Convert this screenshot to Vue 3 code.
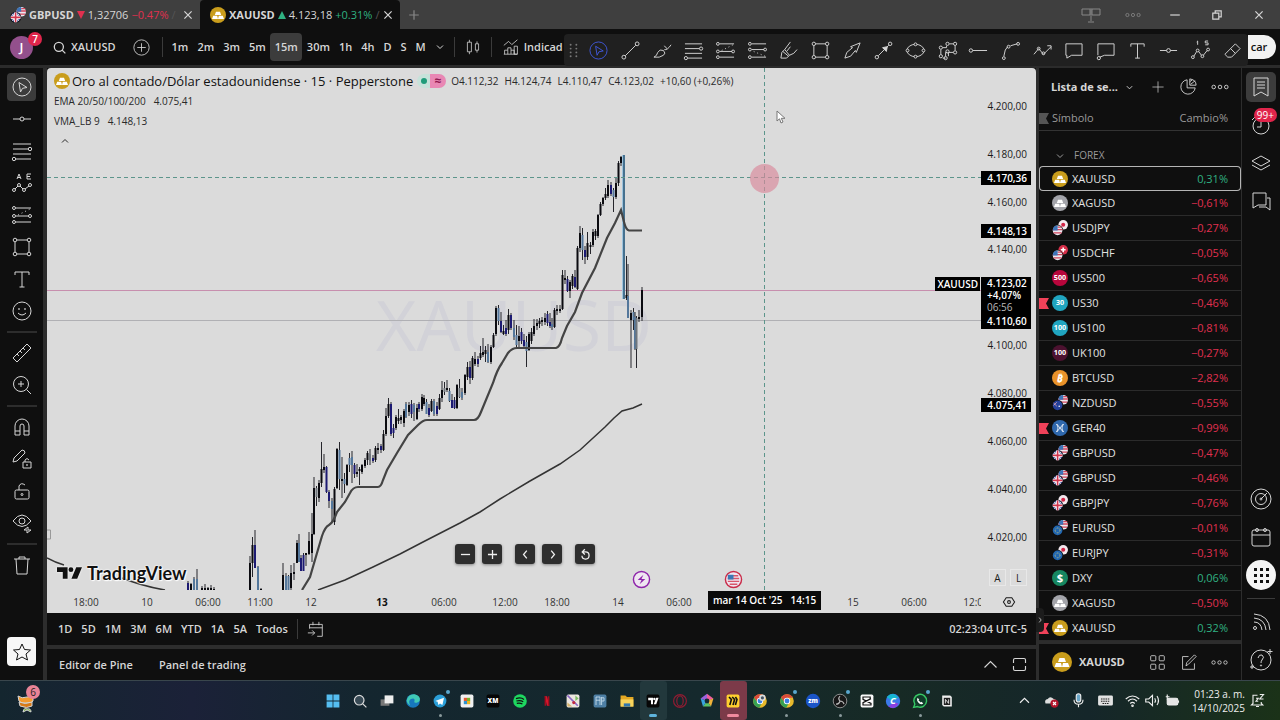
<template>
  <div class="desktop">
    <header class="titlebar">
      <div v-for="tab in tabs" :key="tab.name" class="tab" :class="{ active: tab.active }">
        <svg class="coin" viewBox="0 0 20 20" v-html="coins[tab.coin]"></svg>
        <b>{{ tab.name }}</b>
        <i class="tri" :class="tab.dir"></i>
        <span>{{ tab.price }}</span>
        <span :class="tab.dir">{{ tab.change }}</span>
        <span class="fade">/</span>
        <button class="tab-close" aria-label="Cerrar"><svg viewBox="0 0 20 20" v-html="icons.close"></svg></button>
      </div>
      <button class="tab-add" aria-label="Nueva pestaña"><svg viewBox="0 0 20 20" v-html="icons.plus"></svg></button>
      <div class="win-buttons">
        <button v-for="w in ['layout', 'dots', 'minimize', 'restore', 'close']" :key="w" :class="w" :aria-label="w">
          <svg viewBox="0 0 20 20" v-html="icons[w]"></svg>
        </button>
      </div>
    </header>

    <div class="topbar">
      <button class="avatar" aria-label="Perfil">J<span class="badge">7</span></button>
      <button class="search"><svg viewBox="0 0 20 20" v-html="icons.search"></svg>XAUUSD</button>
      <button class="compare" aria-label="Comparar"><svg viewBox="0 0 20 20" v-html="icons.circlePlus"></svg></button>
      <i class="vsep"></i>
      <div class="intervals">
        <button v-for="i in intervals" :key="i" :class="{ on: i === '15m' }">{{ i }}</button>
        <button aria-label="Más"><svg class="tiny" viewBox="0 0 20 20" v-html="icons.down"></svg></button>
      </div>
      <i class="vsep"></i>
      <button class="candle-btn" aria-label="Velas"><svg viewBox="0 0 20 20" v-html="icons.candles"></svg></button>
      <i class="vsep"></i>
      <button class="indicators"><svg viewBox="0 0 20 20" v-html="icons.indicators"></svg>Indicad</button>
      <button class="publish">car</button>
      <div class="favorites">
        <svg class="grip" viewBox="0 0 20 20" v-html="icons.grip"></svg>
        <button v-for="(f, n) in favorites" :key="n" :class="{ picked: n === 0 }" :aria-label="f">
          <svg viewBox="0 0 20 20" v-html="icons[f]"></svg>
        </button>
      </div>
    </div>

    <main class="workspace">
      <nav class="tools">
        <template v-for="(t, n) in tools" :key="n">
          <hr v-if="t === '-'">
          <button v-else :class="{ on: n === 0 }" :aria-label="t"><svg viewBox="0 0 20 20" v-html="icons[t]"></svg></button>
        </template>
        <button class="star" aria-label="Favoritos"><svg viewBox="0 0 20 20" v-html="icons.star"></svg></button>
      </nav>

      <section class="center">
        <div class="chart">
          <div class="plot">
            <div class="watermark">XAUUSD</div>
            <svg class="series" viewBox="47 68 934 522" preserveAspectRatio="none">
              <path d="M47 290.5H981" stroke="#c78fae" />
              <path d="M47 320.5H981" stroke="#b0b0b4" />
              <path d="M47 530H50.500V539H47" stroke="#999" fill="none" />
              <path class="ema" d="M47 558Q56 563 64 565M122 578Q142 586 165 590M318 590L345 580L373 567L400 554L423 542L460 523L480 512L500 499L530 481L560 464L580 450L605 427L614 418L622 411L633 408L642 404" />
              <g v-for="(c, n) in candles" :key="n" :fill="tones[c[5]]" stroke="none">
                <rect :x="c[0] - 0.5" :y="c[1]" width="1" :height="c[2] - c[1]" fill="#26262c" />
                <rect :x="c[0] - 1" :y="c[3]" width="2" :height="c[4] - c[3]" />
              </g>
              <g stroke="none">
                <rect x="622" y="155" width="2" height="144" fill="#9dc3dd" />
                <rect x="623" y="155" width="2" height="144" fill="#46718f" />
              </g>
              <path class="vma" d="M302 590L310 577L317 553L322 536Q325 527 329 525Q333 523 337 512L345 502L350 493Q353 487 358 487H378Q381 487 383 480L387 470L397 453L408 435L418 425Q423 420 427 420H474Q478 420 481 412L493 383Q497 370 502 363L508 353Q512 348 517 348H556Q560 347 562 338L567 326L575 312L582 293L595 268L607 238L615 223L621 210L624 222Q626 230 629 230.500H642" />
              <path class="cross" d="M47 177.5H981M764.500 68V590" />
            </svg>
            <i class="halo"></i>
            <svg class="pointer" viewBox="0 0 10 14"><path d="M1 1v10l2.500-2.200L5 13l2-1-1.700-3.700H9z" fill="#fff" stroke="#777" /></svg>

            <div class="legend">
              <div class="title">
                <svg class="coin" viewBox="0 0 20 20" v-html="coins.gold"></svg>
                <span class="name">Oro al contado/Dólar estadounidense · 15 · Pepperstone</span>
                <span class="status"><i></i><b>≈</b></span>
                <span class="ohlc"><span>O4.112,32</span><span>H4.124,74</span><span>L4.110,47</span><span>C4.123,02</span><span>+10,60 (+0,26%)</span></span>
              </div>
              <div class="study"><span>EMA 20/50/100/200</span><span>4.075,41</span></div>
              <div class="study"><span>VMA_LB 9</span><span>4.148,13</span></div>
              <button class="fold" aria-label="Ocultar"><svg viewBox="0 0 20 20" v-html="icons.up"></svg></button>
            </div>

            <div class="brand">
              <svg viewBox="0 0 26 14"><path d="M0 1h11v12H6V6H0zM20 1h6l-5 12h-6z" /><circle cx="14.500" cy="3.500" r="2.500" /></svg>
              <span>TradingView</span>
            </div>
            <div class="zoomers">
              <button v-for="z in ['minus', 'add', 'left', 'right', 'reset']" :key="z" :class="z" :aria-label="z"><svg viewBox="0 0 20 20" v-html="icons[z]"></svg></button>
            </div>
            <svg class="event bolt" viewBox="0 0 20 20"><circle cx="10" cy="10" r="8.500" /><path d="M12 5l-6 5.500h4L8 15l6-5.500h-4z" fill="#8e24aa" stroke="none" /></svg>
            <svg class="event flag" viewBox="0 0 20 20"><circle cx="10" cy="10" r="8.500" /><path d="M5 6h10M4 9h12M4 12h12M6 15h8" stroke="#d8566a" /><path d="M4 5h6v5H4z" fill="#3b78b5" stroke="none" /></svg>
          </div>

          <div class="prices">
            <span v-for="p in prices" :key="p[0]" class="mark" :style="{ top: pct(p[1] - 68, 522) }">{{ p[0] }}</span>
            <b v-for="p in priceTags" :key="p[0]" class="tag" :style="{ top: pct(p[1] - 68, 522) }">{{ p[0] }}</b>
            <div class="now"><b>4.123,02</b><b>+4,07%</b><span>06:56</span><b>4.110,60</b></div>
            <b class="sym">XAUUSD</b>
            <div class="scale"><button>A</button><button>L</button></div>
          </div>

          <div class="times">
            <span v-for="(t, n) in times" :key="n" :class="{ strong: t[0] === '13' }" :style="{ left: pct(t[1] - 47, 934) }">{{ t[0] }}</span>
            <b class="time-tag"><span>mar 14 Oct '25</span><span>14:15</span></b>
          </div>
          <button class="axis-cfg" aria-label="Ajustes"><svg viewBox="0 0 20 20" v-html="icons.hex"></svg></button>
        </div>

        <div class="ranges">
          <button v-for="r in ranges" :key="r">{{ r }}</button>
          <i class="vsep"></i>
          <button aria-label="Ir a"><svg viewBox="0 0 20 20" v-html="icons.goto"></svg></button>
          <span class="clock">02:23:04 UTC-5</span>
        </div>
        <div class="panels">
          <button>Editor de Pine</button>
          <button>Panel de trading</button>
          <button class="push" aria-label="Abrir"><svg viewBox="0 0 20 20" v-html="icons.wideUp"></svg></button>
          <button aria-label="Maximizar"><svg viewBox="0 0 20 20" v-html="icons.maximize"></svg></button>
        </div>
      </section>

      <aside class="watchlist">
        <div class="wl-head">
          <button class="wl-name">Lista de se...<svg class="tiny" viewBox="0 0 20 20" v-html="icons.down"></svg></button>
          <button v-for="i in ['plus', 'pie', 'dots']" :key="i" :aria-label="i"><svg viewBox="0 0 20 20" v-html="icons[i]"></svg></button>
        </div>
        <table>
          <thead>
            <tr class="cols"><th><i class="pin"></i>Símbolo</th><th>Cambio%</th></tr>
            <tr class="group"><th colspan="2"><svg class="tiny" viewBox="0 0 20 20" v-html="icons.down"></svg>FOREX</th></tr>
          </thead>
          <tbody>
            <tr v-for="(r, n) in rows" :key="n" :class="{ current: n === 0 }">
              <td><i v-if="r[3]" class="pin red"></i><svg class="coin" viewBox="0 0 20 20" v-html="coins[r[1]]"></svg>{{ r[0] }}</td>
              <td :class="r[2][0] === '−' ? 'down' : 'up'">{{ r[2] }}</td>
            </tr>
          </tbody>
        </table>
        <button class="collapse" aria-label="Contraer"><svg viewBox="0 0 20 20" v-html="icons.right"></svg></button>
        <div class="detail">
          <svg class="coin" viewBox="0 0 20 20" v-html="coins.gold"></svg>
          <b>XAUUSD</b>
          <button v-for="i in ['grid', 'edit', 'dots']" :key="i" :aria-label="i"><svg viewBox="0 0 20 20" v-html="icons[i]"></svg></button>
        </div>
      </aside>

      <nav class="rail">
        <button class="on" aria-label="Lista"><svg viewBox="0 0 20 20" v-html="icons.list"></svg></button>
        <button aria-label="Alertas"><svg viewBox="0 0 20 20" v-html="icons.alarm"></svg><span class="badge">99+</span></button>
        <button aria-label="Datos"><svg viewBox="0 0 20 20" v-html="icons.layers"></svg></button>
        <button aria-label="Chat"><svg viewBox="0 0 20 20" v-html="icons.chat"></svg></button>
        <button class="lower" aria-label="Screener"><svg viewBox="0 0 20 20" v-html="icons.radar"></svg></button>
        <button aria-label="Calendario"><svg viewBox="0 0 20 20" v-html="icons.calendar"></svg></button>
        <button class="apps" aria-label="Productos"><svg viewBox="0 0 20 20" v-html="icons.apps"></svg></button>
        <hr>
        <button aria-label="Noticias"><svg viewBox="0 0 20 20" v-html="icons.feed"></svg></button>
        <button aria-label="Ayuda"><svg viewBox="0 0 20 20" v-html="icons.help"></svg></button>
      </nav>
    </main>

    <footer class="taskbar">
      <button class="widget" aria-label="Widgets">
        <svg viewBox="0 0 20 20"><path d="M1 5q4 3 9 1 5 0 6-2v6q-2 3-6 2-6 1-8-2z" fill="#f39a2d" /><path d="M2 11q6 3 13 0v4q-5 3-12 0z" fill="#d77a18" /><path d="M6 21q1-5 4-3 4-1 4 3l-4-2z" fill="#7cb342" /></svg>
        <span class="badge">6</span>
      </button>
      <div class="apps-row">
        <button v-for="(a, n) in apps" :key="n" :class="[a[1]]" :aria-label="'app ' + n">
          <svg viewBox="0 0 20 20" v-html="a[0]"></svg>
        </button>
      </div>
      <div class="tray">
        <svg v-for="i in ['up', 'cloud', 'mic', 'keyboard']" :key="i" :class="i" viewBox="0 0 20 20" v-html="icons[i]"></svg>
        <span class="net"><svg v-for="i in ['wifi', 'sound', 'battery']" :key="i" viewBox="0 0 20 20" v-html="icons[i]"></svg></span>
        <span class="date"><span>01:23 a. m.</span><span>14/10/2025</span></span>
        <svg viewBox="0 0 20 20" v-html="icons.bell"></svg>
      </div>
    </footer>
  </div>
</template>

<script setup>
const pct = (v, total) => (v / total) * 100 + '%';

const tabs = [
  { name: 'GBPUSD', coin: 'gbus', dir: 'down', price: '1,32706', change: '−0.47%' },
  { name: 'XAUUSD', coin: 'gold', dir: 'up', price: '4.123,18', change: '+0.31%', active: true },
];
const intervals = ['1m', '2m', '3m', '5m', '15m', '30m', '1h', '4h', 'D', 'S', 'M'];
const ranges = ['1D', '5D', '1M', '3M', '6M', 'YTD', '1A', '5A', 'Todos'];
const favorites = ['cursor', 'line', 'brush', 'fib', 'longPos', 'shortPos', 'marker', 'rect', 'arrow', 'arrowLine', 'ellipse', 'bars', 'ray', 'curve', 'zigzag', 'comment', 'callout', 'text', 'hline', 'waves', 'eraser'];
const tools = ['cursor', 'hline', 'fib', 'pattern', 'longPos', 'rect', 'text', 'smile', '-', 'ruler', 'zoomIn', '-', 'magnet', 'penLock', 'lock', 'eye', '-', 'trash'];

const dot = (x, y, r = 1.5) => `<circle cx="${x}" cy="${y}" r="${r}"/>`;
const icons = {
  close: '<path d="M4 4l12 12M16 4L4 16"/>',
  plus: '<path d="M10 2v16M2 10h16"/>',
  layout: '<path d="M1 4h8v6H1zM11 4h8v6h-8zM10 3v13M7 17h6"/>',
  dots: dot(3, 10, 2) + dot(10, 10, 2) + dot(17, 10, 2),
  minimize: '<path d="M2 10h16"/>',
  restore: '<path d="M3 7h10v10H3zM7 7V3h10v10h-4"/>',
  search: '<circle cx="9" cy="9" r="7"/><path d="M14 14L19 19"/>',
  circlePlus: '<circle cx="10" cy="10" r="9"/><path d="M10 5v10M5 10h10"/>',
  down: '<path d="M4 7l6 6 6-6"/>',
  up: '<path d="M4 13l6-6 6 6"/>',
  wideUp: '<path d="M2 14l8-8 8 8"/>',
  candles: '<path d="M3 4h5v12H3zM5.500 1v3M5.500 16v3M13 6h4v8h-4zM15 3v3M15 14v3"/>',
  indicators: '<path d="M1 8l6-5 4 4 7-6M2 19v-5h4v5M6 14v-3h4v8M10 14h4v5M14 19V9h4v10zM1 19h17"/>',
  grip: '<g fill="#777" stroke="none">' + [4, 8, 12, 16].map(y => dot(7, y, 1) + dot(13, y, 1)).join('') + '</g>',
  cursor: '<circle cx="10" cy="10" r="9"/><path d="M7 5.500l8 5-4.500.8L8.500 15z"/>',
  line: '<path d="M4.500 15.500L15.500 4.500"/>' + dot(3, 17, 2) + dot(17, 3, 2),
  brush: '<path d="M1 17q3-1 4-5 2-4 6-2 3 3 0 5-4 3-10 2zM12 9q3 1 7-5M15 8q-2-1-3-3"/>',
  fib: '<path d="M1 3h18M1 8h15M1 13h18M4 18h15"/>' + dot(18, 8, 1.7) + dot(2, 18, 1.7),
  longPos: '<path d="M4 3h15M4 11h13M4 17h15"/><path d="M6 10L18 4" stroke-dasharray="1 3"/>' + dot(2, 3) + dot(2, 11) + dot(18, 11) + dot(2, 17),
  shortPos: '<path d="M4 3h15M4 9h13M4 17h15"/><path d="M6 11l12 5" stroke-dasharray="1 3"/>' + dot(2, 3) + dot(2, 9) + dot(18, 9) + dot(2, 17),
  marker: '<path d="M2 18h6l3-3-5-6-3 3zM6 9l6-8M11 15q5-1 8-6M4 11l6 5M8 11l4-5"/>',
  rect: '<path d="M5 3h10M5 17h10M3 5v10M17 5v10"/>' + dot(3, 3, 1.8) + dot(17, 3, 1.8) + dot(3, 17, 1.8) + dot(17, 17, 1.8),
  arrow: '<path d="M2 18l2-6 6-5-2-1 10-4-4 10-1-2-5 6z"/>',
  arrowLine: '<path d="M4.500 15.500L15.500 4.500"/><path d="M9 7l5-1-1 5z" fill="currentColor"/>' + dot(3, 17, 1.8) + dot(17, 3, 1.8),
  ellipse: '<ellipse cx="10" cy="10" rx="9" ry="6.500"/><g fill="#202020">' + dot(10, 3.5) + dot(10, 16.5) + dot(1.6, 10) + dot(18.4, 10) + '</g>',
  bars: '<path d="M3 14v-5M5 7h4V5M12 3h4M18 5v5M16 12h-5v4M8 18H5M8 16v-4h2"/>' + [[3, 16], [3, 7], [10, 3], [18, 3], [18, 12], [8, 18], [10, 11]].map(p => dot(...p, 1.7)).join(''),
  ray: '<path d="M4 10h15"/>' + dot(2, 10, 1.8),
  curve: '<path d="M3 16q1-8 4-10M10 5l7-2"/>' + dot(3, 18) + dot(8, 6) + dot(18, 3),
  zigzag: '<path d="M1 14l5-6 5 6 8-8M15 5h4v4"/>' + dot(6, 8) + dot(11, 13),
  comment: '<path d="M2 3h17v12H8l-5 3v-3H2z"/>',
  callout: '<path d="M2 15V3h17v12H9l-5 2"/>' + dot(3, 18, 1.7),
  text: '<path d="M3 6V3h14v3M10 3v15M7.500 18h5"/>',
  hline: '<path d="M1 10h7M12 10h7"/>' + dot(10, 10, 2),
  waves: '<path d="M3 16l3-5M8 11l3 4M13 15l4-5"/>' + dot(2, 17) + dot(7, 10) + dot(12, 16) + dot(18, 9) + '<path d="M6 1l1-1v4M18 0h-3v2h3v2h-3"/>',
  pattern: '<path d="M3 16l3-3M8 13l3 3M13 16l4-3M5 6l2-5 2 5M5.500 4.500h3M19 1h-4v5h4M15 3.500h3"/>' + dot(2, 17) + dot(7, 12) + dot(12, 17) + dot(18, 12),
  eraser: '<path d="M2 14L13 3l5 5L9 17H5zM8 8l5 5"/>',
  smile: '<circle cx="10" cy="10" r="9"/><path d="M6 12q4 4 8 0"/><circle cx="7" cy="8" r=".5"/><circle cx="13" cy="8" r=".5"/>',
  ruler: '<path d="M1 15L15 1l4 4L5 19zM5 11l2 2M8 8l2 2M11 5l2 2"/>',
  zoomIn: '<circle cx="9" cy="9" r="7.500"/><path d="M14.500 14.500L19 19M9 6v6M6 9h6"/>',
  magnet: '<path d="M3 18V9a7 7 0 0 1 14 0v9h-5V9a2 2 0 0 0-4 0v9zM3 14h5M12 14h5"/>',
  penLock: '<path d="M1 13l1-4 8-8q3 0 3 3l-8 8zM11 13h8v6h-8zM13 13v-2q2-3 4 0"/><circle cx="15" cy="16" r=".5"/>',
  lock: '<rect x="3" y="9" width="14" height="9" rx="1.500"/><path d="M7 9V5q2-4 6-1"/><circle cx="10" cy="13.500" r="1"/>',
  eye: '<path d="M1 8q9-12 18 0-9 11-18 0z"/><circle cx="10" cy="8" r="3"/><path d="M12 17l4-3v3h3l-4 3v-3z"/>',
  trash: '<path d="M2 4h16M7 4V2h6v2M4 4l1 15h10l1-15"/>',
  star: '<path d="M10 2l2.500 5.500 6 .5-4.500 4 1.500 6-5.500-3-5.500 3L6 12 1.500 8l6-.5z"/>',
  minus: '<path d="M3 10h14"/>',
  add: '<path d="M3 10h14M10 3v14"/>',
  left: '<path d="M12 4l-5 6 5 6"/>',
  right: '<path d="M8 4l5 6-5 6"/>',
  reset: '<path d="M5 6h5a5.500 5.500 0 1 1-5.500 6M9 2L5 6l4 4"/>',
  hex: '<path d="M6 4h8l4 6-4 6H6l-4-6z"/><circle cx="10" cy="10" r="2"/>',
  goto: '<path d="M3 9V4h15v14h-6M3 8h15M7 1v4M14 1v4M1 14h8M6 11l3 3-3 3"/>',
  maximize: '<path d="M2 8V4q0-2 2-2h12q2 0 2 2v4M18 12v4q0 2-2 2H4q-2 0-2-2v-4"/>',
  pie: '<path d="M9 2a8 8 0 1 0 9 9H9z"/><path d="M12 1v7h7q0-6-7-7zM13 7l5-4M12 4l3-2"/>',
  grid: '<rect x="2" y="2" width="6" height="6" rx="1"/><rect x="12" y="2" width="6" height="6" rx="1"/><rect x="2" y="12" width="6" height="6" rx="1"/><rect x="12" y="12" width="6" height="6" rx="1"/>',
  edit: '<path d="M10 3H3v15h14v-7M7 14l1-4 9-9 2 2-9 9z"/>',
  list: '<path d="M3 1h14v18l-7-4-7 4zM6 5h8M6 8h8M6 11h8"/>',
  alarm: '<circle cx="10" cy="11" r="8"/><path d="M10 7v5H6M1 5l3-3"/>',
  layers: '<path d="M1 8l9-5 9 5-9 5zM1 12l9 5 9-5"/>',
  chat: '<path d="M2 2h13v12H7l-5 3zM8 16h7l4 3V7h-3"/>',
  radar: '<circle cx="10" cy="10" r="10"/><circle cx="10" cy="10" r="5.500"/><circle cx="10" cy="10" r="1"/><path d="M10 10l6-6"/>',
  calendar: '<rect x="1" y="3" width="18" height="16" rx="2"/><path d="M1 8h18"/>' + dot(6, 3) + dot(14, 3),
  apps: '<g fill="#111" stroke="none">' + [3, 9, 15].map(y => [3, 9, 15].map(x => `<rect x="${x}" y="${y}" width="3" height="3"/>`).join('')).join('') + '</g>',
  feed: '<circle cx="4" cy="16" r="1.500"/><path d="M3 10q7 0 8 8M3 6q11 1 12 12M3 2q15 1 16 16"/>',
  help: '<circle cx="10" cy="10" r="10"/><path d="M7 8q1-4 4-3 3 2 0 5-1 1-1 3"/><circle cx="10" cy="15.500" r=".6"/><path d="M19-1v5M16.500 1.500h5M1 15v4M-1 17h4"/>',
  cloud: '<path d="M2 14q-2-5 3-6 3-5 8 0 5 1 3 6z" fill="#ddd" stroke="none"/><circle cx="14" cy="14" r="5.500" fill="#b3152b" stroke="none"/><path d="M12 12l4 4M16 12l-4 4" stroke="#fff"/>',
  mic: '<rect x="7" y="1" width="6" height="11" rx="3" fill="#6aa7c9"/><path d="M4 9q0 6 6 6t6-6M10 15v4"/>',
  keyboard: '<rect x="1" y="4" width="18" height="12" rx="1" fill="#ddd"/><path d="M4 8h12M4 11h12M6 14h8" stroke="#222" stroke-dasharray="2 1"/>',
  wifi: '<path d="M1 8q9-8 18 0M4 11q6-6 12 0M7 14q3-3 6 0"/><circle cx="10" cy="17" r="1"/>',
  sound: '<path d="M1 8h4l5-5v14l-5-5H1zM13 7q2 3 0 6M16 4q4 6 0 12"/>',
  battery: '<rect x="3" y="7" width="14" height="9" rx="2" fill="#e5e5e5"/><path d="M18 10v3M3 2v7M1 5h5"/>',
  bell: '<path d="M10 3H4v11l-2 2h15l-2-2v-2M8 18h4M13 2h5l-5 6h5M8 7h3l-3 4h3"/>',
};

// symbol logos, all drawn on a 20x20 canvas
const flags = {
  us: '<circle r="6" fill="#e9e9f0"/><path d="M-6-1h12M-5 3h10M0-4h5" stroke="#d4455b" stroke-width="1.600"/><path d="M-6 0q0-6 6-6v6z" fill="#3d74b8" stroke="none"/>',
  gb: '<circle r="6" fill="#3f5ea8"/><path d="M-4-4l8 8M4-4l-8 8" stroke="#f1dbe2" stroke-width="1.500"/><path d="M0-6v12M-6 0h12" stroke="#fff" stroke-width="4"/><path d="M0-6v12M-6 0h12" stroke="#d0354e" stroke-width="2"/>',
  jp: '<circle r="6" fill="#f3e9ee"/><circle r="2.500" fill="#d32446"/>',
  ch: '<circle r="6" fill="#d62f49"/><path d="M0-3v6M-3 0h6" stroke="#fff" stroke-width="2"/>',
  nz: '<circle r="6" fill="#24409a"/><path d="M-5-3l4 4M-1-4l-4 4" stroke="#e8a8b5"/><circle cx="2" cy="1" r="1" fill="#fff"/>',
  eu: '<circle r="6" fill="#2166b0"/><circle r="3" fill="none" stroke="#e7d26b" stroke-dasharray="1 1"/>',
};
const pair = (a, b) => `<g stroke="none"><g transform="translate(14 6)">${flags[b]}</g><circle cx="7" cy="13" r="7" fill="#0f0f0f"/><g transform="translate(7 13)">${flags[a]}</g></g>`;
const disc = (color, inner) => `<circle cx="10" cy="10" r="10" fill="${color}" stroke="none"/>${inner}`;
const bars = '<path d="M7.500 6h5l1.500 4H6zM4 11h5l1 4H2.500zM11 11h5l1.500 4H10z" fill="#fff" stroke="none"/>';
const label = (t, size) => `<text x="10" y="13" text-anchor="middle" font-size="${size}" font-weight="700" fill="#fff" stroke="none">${t}</text>`;
const coins = {
  gold: disc('#c99d1c', bars),
  silver: disc('#a3a4aa', bars),
  usjp: pair('us', 'jp'),
  usch: pair('us', 'ch'),
  gbus: pair('gb', 'us'),
  gbjp: pair('gb', 'jp'),
  nzus: pair('nz', 'us'),
  euus: pair('eu', 'us'),
  eujp: pair('eu', 'jp'),
  s500: disc('#b8063c', label('500', 9)),
  s30: disc('#20a5c0', label('30', 9)),
  s100: disc('#20a5c0', label('100', 9)),
  u100: disc('#4c1230', label('100', 9)),
  btc: disc('#e9922a', '<g transform="rotate(12 10 10)"><text x="10" y="15" text-anchor="middle" font-size="13" font-weight="700" fill="#fff" stroke="none">₿</text></g>'),
  ger: disc('#2f68ad', '<path d="M5.500 5q4 5 0 10M14.500 5q-4 5 0 10M6 5l8 10M14 5L6 15" stroke="#fff"/>'),
  dxy: disc('#168761', '<text x="10" y="15" text-anchor="middle" font-size="14" font-weight="700" fill="#fff" stroke="none">$</text>'),
};

const rows = [
  ['XAUUSD', 'gold', '0,31%'],
  ['XAGUSD', 'silver', '−0,61%'],
  ['USDJPY', 'usjp', '−0,27%'],
  ['USDCHF', 'usch', '−0,05%'],
  ['US500', 's500', '−0,65%'],
  ['US30', 's30', '−0,46%', true],
  ['US100', 's100', '−0,81%'],
  ['UK100', 'u100', '−0,27%'],
  ['BTCUSD', 'btc', '−2,82%'],
  ['NZDUSD', 'nzus', '−0,55%'],
  ['GER40', 'ger', '−0,99%', true],
  ['GBPUSD', 'gbus', '−0,47%'],
  ['GBPUSD', 'gbus', '−0,46%'],
  ['GBPJPY', 'gbjp', '−0,76%'],
  ['EURUSD', 'euus', '−0,01%'],
  ['EURJPY', 'eujp', '−0,31%'],
  ['DXY', 'dxy', '0,06%'],
  ['XAGUSD', 'silver', '−0,50%'],
  ['XAUUSD', 'gold', '0,32%', true],
];

const prices = [
  ['4.200,00', 106], ['4.180,00', 154], ['4.160,00', 202], ['4.140,00', 249], ['4.100,00', 345],
  ['4.080,00', 393], ['4.060,00', 441], ['4.040,00', 489], ['4.020,00', 537],
];
const priceTags = [['4.170,36', 178], ['4.148,13', 231], ['4.075,41', 405]];
const times = [
  ['18:00', 86], ['10', 147], ['06:00', 208], ['11:00', 260], ['12', 311], ['13', 382], ['06:00', 444],
  ['12:00', 505], ['18:00', 557], ['14', 618], ['06:00', 679], ['15', 853], ['06:00', 914], ['12:00', 976],
];

const tones = { k: '#0b0b10', n: '#1c1a72', b: '#54779b', g: '#70767c' };
// x, high, low, body top, body bottom, tone
const candles = [
  [188, 581, 590, 583, 590, 'n'], [191, 583, 590, 584, 590, 'k'], [194, 577, 590, 579, 590, 'b'], [197, 569, 590, 579, 590, 'b'],
  [202, 586, 590, 588, 590, 'k'], [205, 584, 590, 588, 590, 'k'], [208, 587, 590, 588, 590, 'k'], [211, 585, 590, 588, 590, 'k'], [214, 587, 590, 589, 590, 'k'],
  [250, 556, 590, 563, 590, 'k'], [252.5, 537, 577, 545, 563, 'k'], [255, 530, 568, 545, 568, 'n'], [258, 566, 590, 567, 590, 'b'], [261, 588, 590, 589, 590, 'k'],
  [283, 563, 590, 575, 590, 'k'], [286, 573, 590, 576, 590, 'b'], [288.5, 575, 590, 576, 590, 'b'], [291, 565, 590, 573, 588, 'k'], [294, 563, 580, 572, 574, 'k'],
  [297, 540, 563, 543, 563, 'k'], [299, 534, 560, 543, 562, 'b'], [301, 555, 571, 558, 571, 'n'], [303.5, 553, 571, 555, 571, 'n'], [306, 553, 566, 553, 555, 'k'],
  [309, 532, 555, 541, 554, 'k'], [312, 513, 562, 534, 553, 'k'], [314, 477, 535, 488, 534, 'k'], [316.5, 486, 506, 488, 497, 'g'], [319, 480, 502, 483, 498, 'k'],
  [321.5, 442, 487, 469, 483, 'k'], [324, 454, 473, 467, 470, 'k'], [326.5, 466, 493, 467, 492, 'n'], [329, 490, 508, 492, 501, 'n'], [332, 498, 523, 501, 509, 'b'],
  [334.5, 487, 525, 489, 522, 'k'], [337, 448, 489, 449, 488, 'k'], [339.5, 442, 490, 450, 479, 'b'], [342, 457, 498, 479, 481, 'k'], [344.5, 473, 493, 479, 484, 'b'],
  [347, 464, 486, 465, 485, 'k'], [349.5, 453, 472, 458, 465, 'b'], [352, 451, 483, 457, 465, 'b'], [354.5, 463, 478, 465, 474, 'n'], [357, 464, 477, 472, 474, 'k'],
  [359.5, 467, 485, 469, 471, 'k'], [362, 464, 474, 465, 472, 'k'], [365, 458, 468, 460, 466, 'k'], [367.5, 451, 465, 453, 460, 'k'], [370, 449, 465, 454, 461, 'g'],
  [373, 455, 463, 458, 461, 'n'], [375.5, 446, 462, 448, 460, 'k'], [378, 443, 454, 448, 450, 'k'], [381, 444, 453, 446, 450, 'n'], [383.5, 430, 451, 434, 450, 'k'],
  [386, 408, 436, 416, 434, 'k'], [388.5, 398, 418, 404, 416, 'k'], [391, 402, 436, 404, 434, 'n'], [393.5, 424, 438, 428, 433, 'n'], [396, 415, 430, 417, 428, 'k'],
  [398.5, 409, 424, 418, 421, 'k'], [401, 415, 424, 417, 420, 'k'], [404, 409, 427, 411, 423, 'k'], [406, 402, 418, 404, 417, 'b'], [409, 402, 416, 405, 412, 'k'],
  [411.5, 400, 418, 404, 414, 'n'], [414, 403, 421, 405, 412, 'b'], [417, 404, 420, 408, 419, 'k'], [419, 402, 412, 404, 409, 'n'], [422, 394, 411, 397, 409, 'k'],
  [424, 395, 406, 398, 404, 'k'], [426.5, 399, 414, 402, 414, 'b'], [429, 404, 417, 408, 415, 'n'], [431.5, 399, 412, 401, 411, 'k'], [434, 399, 416, 401, 414, 'b'],
  [437, 402, 416, 406, 414, 'n'], [439.5, 394, 410, 398, 409, 'k'], [442, 381, 402, 390, 398, 'k'], [444.5, 382, 395, 388, 392, 'g'], [447, 380, 392, 388, 390, 'k'],
  [449.5, 388, 402, 391, 401, 'b'], [452, 394, 408, 400, 408, 'n'], [454.5, 397, 409, 400, 408, 'n'], [457, 384, 409, 385, 408, 'k'], [459.5, 379, 398, 388, 397, 'g'],
  [462, 388, 400, 392, 398, 'b'], [465, 374, 395, 375, 393, 'k'], [467.5, 362, 380, 367, 377, 'k'], [470, 361, 384, 367, 378, 'n'], [472.5, 356, 380, 358, 378, 'k'],
  [475, 352, 366, 359, 364, 'k'], [478, 356, 367, 359, 364, 'n'], [480.5, 346, 360, 353, 358, 'k'], [483, 338, 357, 352, 355, 'k'], [485.5, 346, 362, 350, 354, 'k'],
  [488, 344, 363, 352, 362, 'b'], [491, 345, 364, 347, 362, 'k'], [493.5, 333, 348, 335, 347, 'k'], [496, 306, 336, 308, 334, 'k'], [498.5, 305, 325, 308, 321, 'b'],
  [501, 312, 333, 321, 332, 'n'], [503.5, 325, 335, 331, 334, 'k'], [506, 320, 336, 328, 334, 'n'], [508.5, 309, 334, 315, 330, 'k'], [511, 313, 330, 315, 328, 'n'],
  [514, 320, 340, 328, 337, 'b'], [516.5, 325, 348, 335, 345, 'b'], [519, 326, 348, 336, 341, 'k'], [521.5, 328, 344, 332, 341, 'n'], [524, 334, 347, 340, 346, 'n'],
  [526.5, 336, 367, 342, 351, 'b'], [529, 332, 351, 334, 350, 'k'], [531.5, 328, 344, 332, 341, 'k'], [534, 319, 336, 326, 334, 'k'], [537, 319, 330, 323, 326, 'k'],
  [539.5, 318, 328, 321, 324, 'k'], [542, 317, 326, 320, 322, 'k'], [545, 313, 325, 318, 322, 'k'], [547.5, 311, 326, 314, 323, 'n'], [550, 313, 328, 322, 326, 'n'],
  [552, 318, 330, 324, 327, 'b'], [554.5, 308, 328, 310, 327, 'k'], [557, 305, 315, 309, 311, 'k'], [560, 305, 313, 309, 311, 'k'], [562.5, 270, 310, 275, 309, 'k'],
  [565, 270, 284, 278, 280, 'k'], [567.5, 276, 292, 279, 291, 'n'], [570, 280, 298, 282, 291, 'k'], [572.5, 274, 289, 276, 286, 'k'], [575, 270, 288, 277, 287, 'n'],
  [577.5, 246, 290, 248, 289, 'k'], [580, 226, 252, 233, 248, 'k'], [582.5, 228, 260, 235, 250, 'b'], [585, 246, 264, 250, 257, 'n'], [587.5, 232, 260, 243, 257, 'k'],
  [590.5, 242, 254, 245, 247, 'k'], [593, 229, 247, 232, 245, 'k'], [595.5, 229, 240, 231, 236, 'k'], [598, 214, 238, 215, 236, 'k'], [600.5, 202, 216, 204, 215, 'k'],
  [603, 197, 206, 198, 204, 'k'], [605.5, 188, 200, 194, 198, 'k'], [608, 180, 198, 185, 196, 'k'], [611, 182, 196, 185, 194, 'n'], [613.5, 188, 212, 190, 197, 'b'],
  [616, 178, 199, 183, 197, 'k'], [618.5, 161, 186, 163, 183, 'k'], [621, 156, 166, 157, 163, 'k'],
  [626.5, 256, 300, 295, 298, 'k'], [628, 264, 318, 296, 318, 'b'], [631, 310, 368, 313, 320, 'k'], [633.5, 308, 330, 312, 320, 'b'], [635, 312, 350, 317, 349, 'b'],
  [636.5, 316, 368, 318, 349, 'g'], [639, 310, 322, 317, 319, 'k'], [642, 287, 321, 290, 317, 'k'],
];

const tile = (color, inner) => `<rect x="2" y="2" width="16" height="16" rx="2" fill="${color}"/>${inner}`;
const word = (t, size, fill = '#fff') => `<text x="10" y="13" text-anchor="middle" font-size="${size}" font-weight="900" fill="${fill}">${t}</text>`;
const chrome = '<circle cx="10" cy="10" r="8.500" fill="#e8b92b"/><path d="M2.600 6A8.500 8.500 0 0 1 17.400 6H10L7 12z" fill="#d94a3a"/><path d="M2.600 6A8.500 8.500 0 0 0 9 18.500l4-7H7z" fill="#36a152"/><circle cx="10" cy="10" r="4" fill="#fff"/><circle cx="10" cy="10" r="3" fill="#3b7de0"/>';
const tv = '<path d="M4 6h6v8H7.500V9H4zM14 6h3l-3 8h-3z" fill="#fff"/><circle cx="11.700" cy="7.500" r="1.500" fill="#fff"/>';
const apps = [
  ['<path d="M2 2h7.500v7.500H2zM10.500 2H18v7.500h-7.500zM2 10.500h7.500V18H2zM10.500 10.500H18V18h-7.500z" fill="#55bdf0"/>'],
  ['<circle cx="9" cy="9" r="6" fill="#384a55" stroke="#ddd" stroke-width="1.500"/><path d="M13.500 13.500L18 18" stroke="#ddd" stroke-width="1.500"/>'],
  ['<path d="M2 8h11v8H2z" fill="#777"/><path d="M7 3h11v10H7z" fill="#eee"/>'],
  ['<circle cx="10" cy="10" r="8.500" fill="#1777bd"/><path d="M2 9q2-8 10-7.500 8 2 6.500 8-2 4-7 2 2-6-4-4-4 2-1 8-4-2-4.500-6.500z" fill="#40c9b5"/>'],
  ['<circle cx="10" cy="10" r="8" fill="#2b9fd8"/><path d="M4 10l11-4-2 9-3-2-2 2-1-4z" fill="#fff"/>', 'running note'],
  [tile('#f0f0f0', '<path d="M6 6h4v4H6z" fill="#e35b35"/><path d="M10 6h4v4h-4z" fill="#7ab52d"/><path d="M6 10h4v4H6z" fill="#2c93d1"/><path d="M10 10h4v4h-4z" fill="#f0b41f"/>')],
  [tile('#060606', word('XM', 8))],
  ['<circle cx="10" cy="10" r="8.500" fill="#1ed760"/><path d="M5 7q6-2 10 1M5.500 10q5-1.500 8.500 1M6 13q4-1 7 .8" stroke="#111" stroke-width="1.500" fill="none"/>'],
  ['<path d="M7 4h3l3 12h-3z" fill="#e01a30"/><path d="M7 4h2v12H7zM11 4h2v12h-2z" fill="#a50c1e"/>'],
  [tile('#ece6df', '<path d="M3 3l13 13" stroke="#8a66c4" stroke-width="2"/><path d="M13 3l4 4-4 3z" fill="#7dbd64"/><path d="M3 12l6 5H3z" fill="#d8b46a"/><circle cx="11" cy="12" r="2" fill="#c12a40"/>')],
  [tile('#4d7fa4', '<path d="M5 15V5h5v10M12 5v10M12 6h3v4h-3M5 9h5" stroke="#cfe3f0" fill="none"/>')],
  ['<path d="M2 3h6l2 2h8v12H2z" fill="#e4a823"/><path d="M2 8h16v9H2z" fill="#f8d45c"/><path d="M6 13h8v4H6z" fill="#3277ad"/>'],
  [tile('#070707', tv), 'focus'],
  ['<ellipse cx="10" cy="10" rx="8" ry="8" fill="none" stroke="#8e1c32" stroke-width="1.500"/><ellipse cx="10" cy="10" rx="4" ry="6.500" fill="none" stroke="#8e1c32" stroke-width="1.500"/>'],
  ['<path d="M10 1l8 6-8 4z" fill="#ef5d9c"/><path d="M18 7l-3 10-5-7z" fill="#f1b33a"/><path d="M15 17H5l5-7z" fill="#5cc165"/><path d="M5 17L2 7l8 3z" fill="#37a4e0"/><path d="M2 7l8-6v9z" fill="#9b62dd"/><circle cx="10" cy="10" r="3" fill="#152a33"/>'],
  [tile('#ffd02f', '<path d="M5 5l3 3-2 7M9 5l3 3-2 7M13 5l2 3-2 7" stroke="#111" stroke-width="2" fill="none"/>'), 'hot'],
  [chrome + '<circle cx="13" cy="6" r="4" fill="#ddd"/><circle cx="13" cy="6" r="2" fill="#456"/>'],
  [chrome, 'running note'],
  ['<circle cx="10" cy="10" r="9" fill="#1a54c8"/>' + word('zm', 8)],
  ['<circle cx="10" cy="10" r="8.500" fill="#171717" stroke="#aaa"/><path d="M10 4q-3 3 0 6 4 0 5 4M10 10q-1 4-5 4" stroke="#bbb" stroke-width="1.500" fill="none"/>', 'running note'],
  [tile('#fafafa', '<path d="M14 7V5H5v3l10 5v2H5v-3l10-5" stroke="#111" stroke-width="1.500" fill="none"/>')],
  ['<circle cx="10" cy="10" r="9" fill="#3b79e8"/><path d="M2 5q8-8 15 1l-8 4z" fill="#15b5cf"/><path d="M4 17q8 5 13-4l-6-1z" fill="#8a3fe0"/><text x="10" y="14" text-anchor="middle" font-size="12" font-style="italic" font-weight="700" fill="#fff">C</text>'],
  ['<path d="M2 18l1.500-4A8 8 0 1 1 7 17z" fill="#103d2a" stroke="#37c765" stroke-width="1.800"/><path d="M7 6l2 2-1 1 3 3 1-1 2 2q-2 2-5 0-4-3-2-7z" fill="#fff"/>', 'running note'],
  ['<path d="M4 3h10l2 2v12H6l-2-2z" fill="#eee"/><path d="M6 6h8v9H6z" fill="#222"/><path d="M8 13V8l4 5V8" stroke="#fff" fill="none"/>'],
];
</script>

<style>
body { background: #0f0f0f; }
</style>

<style scoped>
.desktop {
  min-height: 100vh;
  display: flex;
  flex-direction: column;
  overflow: hidden;
  background: #0f0f0f;
  color: #d6d6d6;
  font-family: "Trebuchet MS", "Open Sans", "Noto Sans", sans-serif;
  font-size: 11px;
  line-height: 16px;
}
* { box-sizing: border-box; }
button {
  display: flex;
  align-items: center;
  justify-content: center;
  padding: 0;
  border: 0;
  background: none;
  color: inherit;
  font: inherit;
  white-space: nowrap;
}
svg {
  flex: none;
  width: 20px;
  height: 20px;
  fill: none;
  stroke: currentColor;
  stroke-width: 1;
  overflow: visible;
}
.coin { width: 16px; height: 16px; }
.tiny { width: 10px; height: 10px; stroke-width: 2; }
.up { color: #2fb182; }
.down { color: #e0304f; }
.vsep { width: 1px; height: 20px; background: #3b3b3b; }
.badge {
  position: absolute;
  min-width: 14px;
  height: 14px;
  border-radius: 7px;
  background: #e0254b;
  color: #fff;
  font-size: 10px;
  line-height: 14px;
  text-align: center;
}

.titlebar { display: flex; height: 29px; background: #3f3f3f; }
.tab { flex: none; display: flex; align-items: center; gap: 3px; width: 200px; padding: 0 6px 0 10px; white-space: nowrap; }
.tab.active { background: #0f0f0f; border-radius: 4px 4px 0 0; }
.tab .fade { color: #555; }
.tab-close { margin-left: auto; }
.tab-close svg, .tab-add svg { width: 12px; height: 12px; stroke-width: 2; }
.tab-add { margin-left: 8px; color: #888; }
.tri { border: 4px solid transparent; }
.tri.down { border-top: 8px solid #e0304f; border-bottom: 0; }
.tri.up { border-bottom: 8px solid #2fb182; border-top: 0; }
.win-buttons { display: flex; margin-left: auto; }
.win-buttons button { width: 42px; }
.win-buttons svg { width: 12px; height: 12px; stroke-width: 2; }
.win-buttons .layout, .win-buttons .dots { color: #888; }
.win-buttons .layout svg { width: 20px; height: 20px; stroke-width: 1; }
.win-buttons .dots svg { width: 16px; height: 16px; stroke-width: 1; }

.topbar { position: relative; display: flex; align-items: center; height: 39px; padding: 0 4px 0 10px; border-bottom: 3px solid #2b2b2b; font-weight: 600; }
.avatar { position: relative; width: 23px; height: 23px; border-radius: 50%; background: #93508c; color: #fff; font-size: 13px; }
.avatar .badge { top: -4px; right: -9px; }
.search { gap: 5px; margin-left: 20px; }
.search svg { width: 13px; height: 13px; stroke-width: 2; }
.compare { margin: 0 12px 0 17px; }
.compare svg { width: 17px; height: 17px; }
.intervals { display: flex; margin: 0 5px 0 4px; }
.intervals button { height: 28px; padding: 0 4px 0 5px; border-radius: 4px; }
.intervals .on { background: #3c3c3c; }
.candle-btn { margin: 0 10px; }
.candle-btn svg, .indicators svg { width: 16px; height: 16px; }
.indicators { gap: 5px; margin-left: 11px; }
.publish { margin-left: auto; width: 28px; height: 24px; padding-right: 6px; border-radius: 0 12px 12px 0; background: #f2f2f2; color: #111; }
.favorites {
  position: absolute;
  z-index: 3;
  left: 564px;
  right: 32px;
  top: 5px;
  height: 32px;
  display: flex;
  align-items: center;
  background: #202020;
  border-radius: 4px;
}
.favorites button { flex: 1; }
.favorites svg { width: 19px; height: 19px; }
.favorites .picked { color: #3f57d8; }

.workspace { flex: 1; display: flex; }
.tools { display: flex; flex-direction: column; align-items: center; width: 43px; padding: 3px 0 14px; }
.tools button { width: 29px; height: 32px; }
.tools .on { background: #3c3c3c; border-radius: 4px; height: 28px; margin: 2px 0; }
.tools hr { width: 30px; height: 2px; margin: 4px 0; border: 0; background: #2d2d2d; }
.tools .star { height: 29px; margin-top: auto; border-radius: 4px; background: #f7f7f7; color: #111; }

.center { flex: 1; min-width: 0; display: flex; flex-direction: column; border-left: 4px solid #2d2d2d; border-right: 3px solid #2d2d2d; }
.chart { flex: 1; display: grid; grid-template: 1fr 23px / 1fr 55px; background: #dbdbdb; color: #1a1a1a; border-radius: 4px 4px 0 0; }
.plot { position: relative; }
.series { position: absolute; inset: 0; width: 100%; height: 100%; overflow: hidden; }
.ema { stroke: #333; stroke-width: 1.500; }
.vma { stroke: #444; stroke-width: 2.200; }
.cross { stroke: #5c958b; stroke-dasharray: 4 3; }
.watermark { position: absolute; left: 50%; top: 49%; transform: translate(-50%, -50%); color: #d2d2d8; font-size: 70px; line-height: 72px; }
.halo { position: absolute; left: 77%; top: 21%; width: 29px; height: 29px; margin: -14px -16px; border-radius: 50%; background: #d98a9caa; }
.pointer { position: absolute; left: 78%; top: 8%; width: 10px; height: 14px; }
.legend { position: relative; padding: 3px 7px; color: #2a2a2a; font-size: 10px; }
.title { display: flex; align-items: center; height: 20px; white-space: nowrap; }
.title .name { margin-left: 2px; font-size: 13px; color: #111; }
.status { flex: none; display: flex; align-items: center; gap: 3px; height: 14px; margin: 0 5px 0 4px; padding-left: 4px; border-radius: 7px; background: #c6e2da; }
.status i { width: 6px; height: 6px; border-radius: 50%; background: #1f9b79; }
.status b { width: 16px; border-radius: 0 7px 7px 0; background: #e987b4; color: #8f1751; font-size: 12px; line-height: 14px; text-align: center; }
.ohlc { display: flex; gap: 6px; }
.study { display: flex; gap: 8px; height: 20px; align-items: center; }
.fold { width: 22px; height: 20px; }
.fold svg { width: 10px; height: 10px; stroke-width: 2; }
.brand { position: absolute; left: 10px; bottom: 7px; display: flex; align-items: center; gap: 5px; color: #111; font: 700 18px/20px Lato, sans-serif; text-shadow: 0 0 2px #fff, 0 0 2px #fff, 1px 1px 1px #fff; }
.brand svg { width: 25px; height: 14px; fill: #111; stroke: none; filter: drop-shadow(0 0 1px #fff); }
.zoomers { position: absolute; left: 50%; bottom: 26px; margin-left: -59px; display: flex; gap: 7px; }
.zoomers button { width: 20px; height: 20px; border-radius: 3px; background: #2e2e2e; color: #eee; box-shadow: 0 1px 3px #0006; }
.zoomers .left, .zoomers .reset { margin-left: 6px; }
.zoomers svg { width: 13px; height: 13px; stroke-width: 2; }
.event { position: absolute; bottom: 1px; width: 19px; height: 19px; margin-left: -9px; stroke-width: 1.500; }
.event circle { fill: #efe6f1; }
.bolt { left: 63.6%; color: #8e24aa; }
.flag { left: 73.4%; color: #c92b48; }

.prices { position: relative; font-size: 10px; }
.mark, .tag { position: absolute; left: 0; width: 50px; padding-right: 4px; line-height: 14px; transform: translateY(-50%); text-align: right; }
.tag, .now, .sym { background: #000; color: #fff; font-weight: 600; }
.now { position: absolute; left: 0; top: 40%; width: 50px; height: 52px; padding-left: 6px; display: flex; flex-direction: column; line-height: 12px; }
.now b { font-weight: 600; }
.now b:last-child { line-height: 16px; }
.now span { color: #bbb; font-weight: 400; }
.sym { position: absolute; right: 56px; top: 40%; padding: 0 2px; line-height: 14px; }
.scale { position: absolute; left: 8px; bottom: 4px; display: flex; gap: 4px; }
.scale button { width: 17px; height: 17px; border: 1px solid #e8e8e8; }
.times { position: relative; overflow: hidden; font-size: 10px; }
.times > span { position: absolute; top: 4px; transform: translateX(-50%); color: #333; }
.times .strong { font-weight: 700; color: #111; }
.time-tag { position: absolute; left: 661px; top: 1px; display: flex; gap: 8px; padding: 0 5px; background: #0a0a0a; color: #fff; line-height: 19px; font-weight: 600; white-space: nowrap; }
.axis-cfg svg { width: 14px; height: 14px; stroke-width: 1.500; }
.ranges { display: flex; align-items: center; gap: 9px; height: 32px; padding: 0 9px 0 11px; font-weight: 600; }
.ranges svg { width: 17px; height: 17px; }
.clock { margin-left: auto; }
.panels { display: flex; align-items: center; gap: 26px; height: 35px; padding: 0 9px 0 12px; border-top: 4px solid #2d2d2d; font-weight: 600; }
.panels .push { margin-left: auto; }
.panels svg { width: 15px; height: 15px; stroke-width: 1.500; }
.panels .push + button { margin-left: -12px; }

.watchlist { position: relative; width: 203px; display: flex; flex-direction: column; border-right: 1px solid #2d2d2d; }
.wl-head { display: flex; align-items: center; height: 38px; padding: 0 12px; }
.wl-head svg { width: 18px; height: 18px; }
.wl-head button + button { margin-left: 14px; }
.wl-head > button:nth-child(2) svg { width: 14px; height: 14px; }
.wl-name { gap: 7px; margin-right: auto; font-weight: 700; }
.wl-head .tiny { width: 9px; height: 9px; }
table { width: 100%; border-collapse: separate; border-spacing: 0; }
th { position: relative; padding: 0; font-weight: 400; text-align: left; color: #9a9a9a; }
th:last-child, td:last-child { text-align: right; padding-right: 13px; }
.cols th { height: 25px; padding-left: 13px; border-bottom: 1px solid #333; }
.group th { height: 35px; padding: 12px 0 0 16px; text-align: left; font-size: 10px; }
.group svg { margin-right: 9px; vertical-align: -2px; }
td { position: relative; height: 25px; padding: 0; border-bottom: 1px solid #2b2b2b; font-weight: 500; }
td:first-child { padding-left: 13px; color: #e2e2e2; }
td .coin { margin-right: 4px; vertical-align: -4px; }
.current td { border: 1px solid #b5b5b5; border-width: 1px 0; }
.current td:first-child { border-left-width: 1px; border-radius: 4px 0 0 4px; padding-left: 12px; }
.current td:last-child { border-right-width: 1px; border-radius: 0 4px 4px 0; padding-right: 12px; }
.pin { position: absolute; left: 0; top: 7px; width: 10px; height: 11px; background: #555; clip-path: polygon(0 0, 100% 0, 70% 50%, 100% 100%, 0 100%); }
.pin.red { background: #f04259; }
.collapse { position: absolute; left: -3px; bottom: 48px; width: 8px; height: 24px; border-radius: 0 4px 4px 0; background: #1c1c1c; }
.collapse svg { width: 8px; height: 8px; stroke-width: 2; }
.detail { display: flex; align-items: center; height: 39px; margin-top: auto; padding: 0 13px; border-top: 3px solid #2d2d2d; gap: 14px; }
.detail .coin { width: 20px; height: 20px; margin-right: -7px; }
.detail b { margin-right: auto; }
.detail svg { width: 17px; height: 17px; }

.rail { flex: 1; max-width: 38px; display: flex; flex-direction: column; align-items: center; gap: 8px; padding: 4px 0 5px; }
.rail button { position: relative; width: 30px; height: 30px; }
.rail .on { background: #3c3c3c; border-radius: 5px; }
.rail .badge { top: -2px; right: 0; padding: 0 3px; margin-right: -1px; }
.rail .lower { margin-top: auto; }
.rail .apps { background: #f4f4f4; border-radius: 50%; }
.rail hr { width: 28px; height: 1px; margin: 0; border: 0; background: #3b3b3b; }

.taskbar { display: grid; grid-template-columns: 25% 50% 1fr; height: 40px; border-top: 1px solid #39464c; background: linear-gradient(90deg, #14262f, #1b2138 15%, #14262f 28%, #15292d 55%, #172a25 70%, #15262a 85%, #1b3218); }
.widget { position: relative; width: 28px; margin-left: 13px; }
.widget .badge { top: 4px; right: 1px; background: #e88396; color: #222; }
.apps-row { display: flex; }
.apps-row button { position: relative; flex: 1; }
.apps-row svg { width: 16px; height: 16px; stroke: none; }
.focus { background: #22383c; border-radius: 3px; }
.hot { background: #7c3a49; border-radius: 3px; }
.focus::after, .hot::after, .running::after { content: ""; position: absolute; bottom: 3px; width: 8px; height: 3px; border-radius: 2px; background: #5fb4dd; }
.hot::after { width: 12px; background: #f08a9e; }
.running::after { width: 3px; background: #8a9a9c; }
.note::before { content: ""; position: absolute; top: 9px; right: 3px; width: 4px; height: 4px; border-radius: 50%; background: #5aa8cf; }
.tray { display: flex; align-items: center; justify-content: flex-end; gap: 12px; padding-right: 15px; color: #eee; }
.tray svg { width: 15px; height: 15px; stroke-width: 1.500; }
.tray .up { color: #eee; }
.net { display: flex; gap: 5px; }
.date { display: flex; flex-direction: column; align-items: flex-end; font-size: 10px; line-height: 14px; }
.tray > :last-child { margin-left: -7px; }
</style>
